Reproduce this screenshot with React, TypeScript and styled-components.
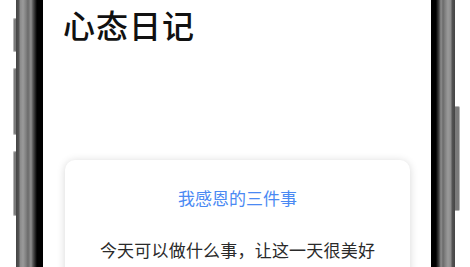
import React from 'react';
import styled, { createGlobalStyle } from 'styled-components';

const GlobalStyle = createGlobalStyle`
  html, body {
    margin: 0;
    padding: 0;
    background: #ffffff;
  }
  body {
    font-family: "Noto Sans CJK SC", "Noto Sans", sans-serif;
  }
`;

const Page = styled.div`
  display: flex;
  height: 267px;
  width: 470px;
  overflow: hidden;
  background: #ffffff;
`;

const ButtonRail = styled.div<{ $side: 'left' | 'right' }>`
  display: flex;
  flex-direction: column;
  gap: 16px;
  width: ${(p) => (p.$side === 'left' ? '3px' : '5px')};
  margin-left: ${(p) => (p.$side === 'left' ? '13px' : '0')};
  padding-top: ${(p) => (p.$side === 'left' ? '18px' : '106px')};
`;

const SideButton = styled.div<{ $h: number; $side: 'left' | 'right' }>`
  height: ${(p) => p.$h}px;
  box-sizing: border-box;
  background: #7a7a7a;
  border: 1px solid #b4b4b4;
  border-${(p) => (p.$side === 'left' ? 'right' : 'left')}: none;
  border-radius: ${(p) => (p.$side === 'left' ? '2px 0 0 2px' : '0 2px 2px 0')};
`;

const Bezel = styled.div<{ $side: 'left' | 'right' }>`
  width: ${(p) => (p.$side === 'left' ? '27px' : '24px')};
  background: ${(p) =>
    p.$side === 'left'
      ? `linear-gradient(to right,
          #444 0px, #555 3px, #8a8a8a 4px, #9a9a9a 7px, #808080 10px,
          #6a6a6a 12px, #8e8e8e 15px, #555 17px, #2a2a2a 19px, #000 21px, #000 27px)`
      : `linear-gradient(to left,
          #444 0px, #555 3px, #8a8a8a 4px, #9a9a9a 7px, #808080 10px,
          #6a6a6a 12px, #8e8e8e 14px, #444 16px, #1a1a1a 18px, #000 19px, #000 24px)`};
`;

const Screen = styled.div`
  width: 388px;
  background: #ffffff;
  display: flex;
  flex-direction: column;
  padding: 4px 21px 0 20px;
  box-sizing: border-box;
`;

const Heading = styled.h1`
  margin: 0;
  font-size: 32px;
  line-height: 40px;
  font-weight: 500;
  color: #111111;
  letter-spacing: 1px;
`;

const Card = styled.div`
  margin-top: 116px;
  margin-left: 2px;
  background: #ffffff;
  border-radius: 10px;
  box-shadow: 0 1px 8px rgba(0, 0, 0, 0.16);
  padding: 26px 12px 40px;
  display: flex;
  flex-direction: column;
  align-items: center;
  gap: 28px;
`;

const CardTitle = styled.div`
  font-size: 17px;
  line-height: 24px;
  color: #4a89f3;
`;

const Prompt = styled.div`
  font-size: 17px;
  line-height: 24px;
  color: #2a2a2a;
  letter-spacing: 0.2px;
`;

export default function App() {
  return (
    <Page>
      <GlobalStyle />
      <ButtonRail $side="left">
        <SideButton $side="left" $h={34} />
        <SideButton $side="left" $h={67} />
        <SideButton $side="left" $h={65} />
      </ButtonRail>
      <Bezel $side="left" />
      <Screen>
        <Heading>心态日记</Heading>
        <Card>
          <CardTitle>我感恩的三件事</CardTitle>
          <Prompt>今天可以做什么事，让这一天很美好</Prompt>
        </Card>
      </Screen>
      <Bezel $side="right" />
      <ButtonRail $side="right">
        <SideButton $side="right" $h={105} />
      </ButtonRail>
    </Page>
  );
}
